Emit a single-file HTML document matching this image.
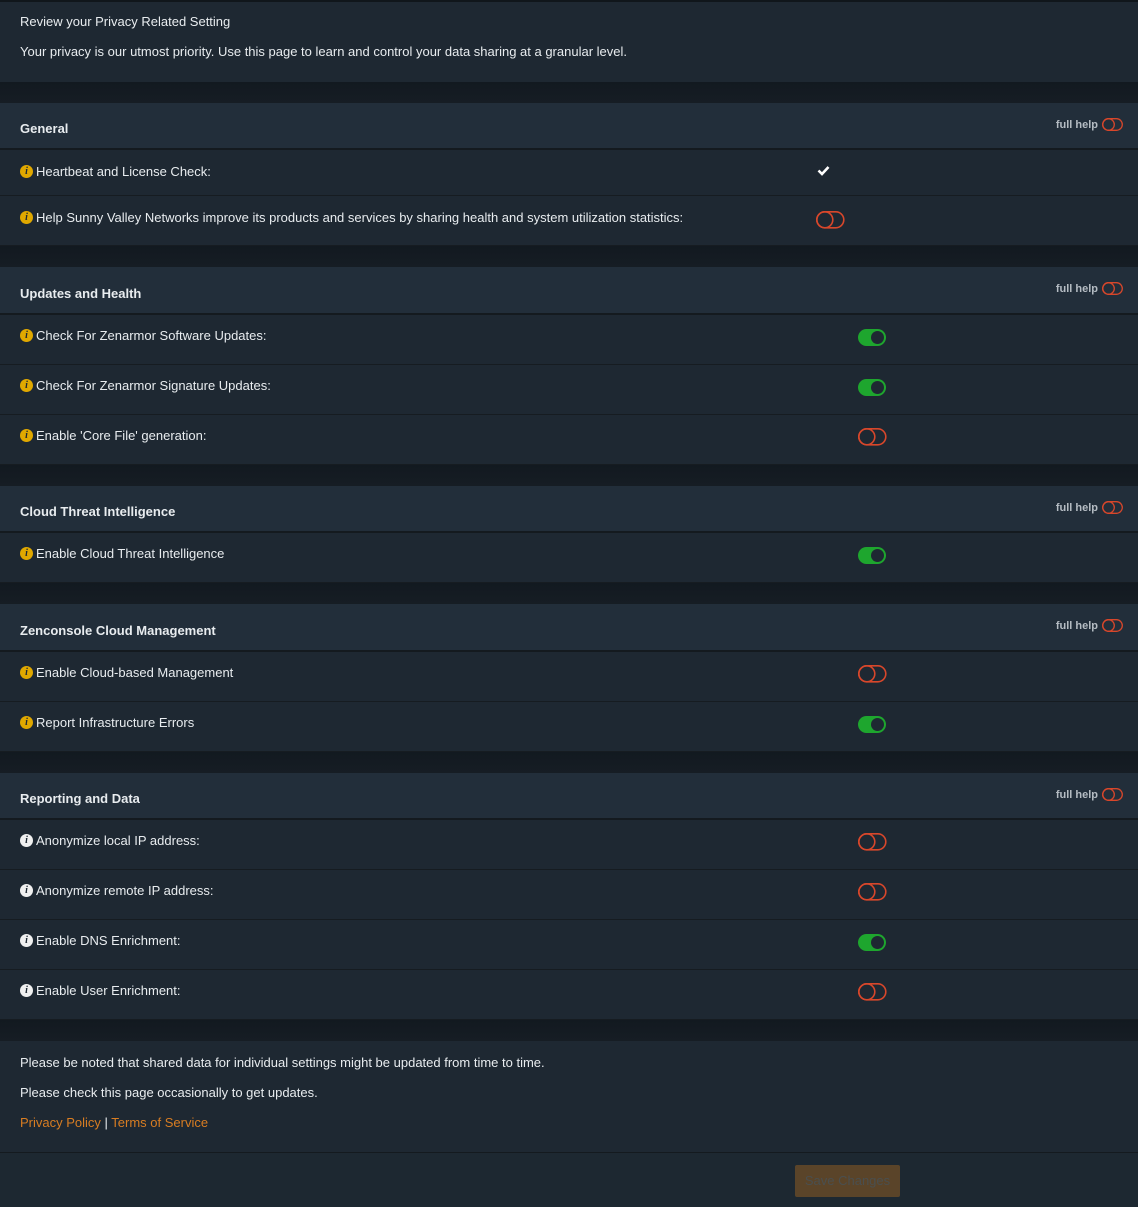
<!DOCTYPE html>
<html><head><meta charset="utf-8"><style>
*{margin:0;padding:0;box-sizing:border-box}
body{width:1138px;height:1207px;background:#1d2831;font-family:"Liberation Sans",sans-serif;font-size:13px;color:#e8ecef;position:relative;overflow:hidden;padding-top:1px}
.top{height:82px;border-top:2px solid #10161b;background:#1e2832;padding:12px 20px;position:relative;margin-top:-1px}
.gap{height:21px;background:linear-gradient(#121920,#161d24)}
.hdr{background:#222e3a;border-bottom:2px solid #141a1f;position:relative;font-weight:bold;padding-left:20px;font-size:13px}
.row{background:#1e2832;border-bottom:1px solid #161c21;position:relative;padding-left:20px}
.row span.t{position:absolute;left:20px;display:flex;align-items:center}
.fh{position:absolute;right:15px;font-size:11px;color:#b5bcc3;font-weight:bold;display:flex;align-items:center;gap:4px}
.tg{position:absolute;left:858px}
.i{display:inline-block;width:13px;height:13px;border-radius:50%;background:#e0a800;color:#1e2832;font-size:10px;font-weight:bold;text-align:center;line-height:13px;margin-right:3px;font-family:"Liberation Serif",serif}
.i.w{background:#f0f0f0}
.foot{background:#1e2832;height:112px;padding:14px 20px;border-bottom:1px solid #141a1f}
.foot p{margin-top:0;height:30px}
a{color:#d87d22;text-decoration:none}
</style></head><body>
<div class="top"><div style="position:absolute;top:12px">Review your Privacy Related Setting</div><div style="position:absolute;top:42px">Your privacy is our utmost priority. Use this page to learn and control your data sharing at a granular level.</div></div>
<div class="gap"></div>

<div class="hdr" style="height:47px"><span style="position:absolute;top:18px">General</span><span class="fh" style="top:15px">full help <svg width="21" height="13"><rect x="0.7" y="0.7" width="19.6" height="11.6" rx="5.8" fill="none" stroke="#d8472b" stroke-width="1.3"/><circle cx="6.5" cy="6.5" r="5.8" fill="none" stroke="#d8472b" stroke-width="1.3"/></svg></span></div>
<div class="row" style="height:46px"><span class="t" style="top:14px"><i class="i">i</i>Heartbeat and License Check:</span><svg style="position:absolute;left:817px;top:15px" width="13" height="11"><path d="M1.5 5.5 L5 9 L11.5 2" fill="none" stroke="#fff" stroke-width="2.6"/></svg></div>
<div class="row" style="height:50px"><span class="t" style="top:14px"><i class="i">i</i>Help Sunny Valley Networks improve its products and services by sharing health and system utilization statistics:</span><svg class="tg" style="left:816px;top:15px" width="29" height="18"><rect x="0.8" y="0.8" width="27" height="16" rx="8" fill="none" stroke="#d8472b" stroke-width="1.6"/><circle cx="8.8" cy="8.8" r="8" fill="none" stroke="#d8472b" stroke-width="1.6"/></svg></div>
<div class="gap"></div>

<div class="hdr" style="height:48px"><span style="position:absolute;top:19px">Updates and Health</span><span class="fh" style="top:15px">full help <svg width="21" height="13"><rect x="0.7" y="0.7" width="19.6" height="11.6" rx="5.8" fill="none" stroke="#d8472b" stroke-width="1.3"/><circle cx="6.5" cy="6.5" r="5.8" fill="none" stroke="#d8472b" stroke-width="1.3"/></svg></span></div>
<div class="row" style="height:50px"><span class="t" style="top:13px"><i class="i">i</i>Check For Zenarmor Software Updates:</span><svg class="tg" style="top:14px" width="28" height="17"><rect x="0" y="0" width="28" height="17" rx="8.5" fill="#1ea62e"/><circle cx="19.5" cy="8.5" r="6.5" fill="#1e2832"/></svg></div>
<div class="row" style="height:50px"><span class="t" style="top:13px"><i class="i">i</i>Check For Zenarmor Signature Updates:</span><svg class="tg" style="top:14px" width="28" height="17"><rect x="0" y="0" width="28" height="17" rx="8.5" fill="#1ea62e"/><circle cx="19.5" cy="8.5" r="6.5" fill="#1e2832"/></svg></div>
<div class="row" style="height:50px"><span class="t" style="top:13px"><i class="i">i</i>Enable 'Core File' generation:</span><svg class="tg" style="top:13px" width="29" height="18"><rect x="0.8" y="0.8" width="27" height="16" rx="8" fill="none" stroke="#d8472b" stroke-width="1.6"/><circle cx="8.8" cy="8.8" r="8" fill="none" stroke="#d8472b" stroke-width="1.6"/></svg></div>
<div class="gap"></div>

<div class="hdr" style="height:47px"><span style="position:absolute;top:18px">Cloud Threat Intelligence</span><span class="fh" style="top:15px">full help <svg width="21" height="13"><rect x="0.7" y="0.7" width="19.6" height="11.6" rx="5.8" fill="none" stroke="#d8472b" stroke-width="1.3"/><circle cx="6.5" cy="6.5" r="5.8" fill="none" stroke="#d8472b" stroke-width="1.3"/></svg></span></div>
<div class="row" style="height:50px"><span class="t" style="top:13px"><i class="i">i</i>Enable Cloud Threat Intelligence</span><svg class="tg" style="top:14px" width="28" height="17"><rect x="0" y="0" width="28" height="17" rx="8.5" fill="#1ea62e"/><circle cx="19.5" cy="8.5" r="6.5" fill="#1e2832"/></svg></div>
<div class="gap"></div>

<div class="hdr" style="height:48px"><span style="position:absolute;top:19px">Zenconsole Cloud Management</span><span class="fh" style="top:15px">full help <svg width="21" height="13"><rect x="0.7" y="0.7" width="19.6" height="11.6" rx="5.8" fill="none" stroke="#d8472b" stroke-width="1.3"/><circle cx="6.5" cy="6.5" r="5.8" fill="none" stroke="#d8472b" stroke-width="1.3"/></svg></span></div>
<div class="row" style="height:50px"><span class="t" style="top:13px"><i class="i">i</i>Enable Cloud-based Management</span><svg class="tg" style="top:13px" width="29" height="18"><rect x="0.8" y="0.8" width="27" height="16" rx="8" fill="none" stroke="#d8472b" stroke-width="1.6"/><circle cx="8.8" cy="8.8" r="8" fill="none" stroke="#d8472b" stroke-width="1.6"/></svg></div>
<div class="row" style="height:50px"><span class="t" style="top:13px"><i class="i">i</i>Report Infrastructure Errors</span><svg class="tg" style="top:14px" width="28" height="17"><rect x="0" y="0" width="28" height="17" rx="8.5" fill="#1ea62e"/><circle cx="19.5" cy="8.5" r="6.5" fill="#1e2832"/></svg></div>
<div class="gap"></div>

<div class="hdr" style="height:47px"><span style="position:absolute;top:18px">Reporting and Data</span><span class="fh" style="top:15px">full help <svg width="21" height="13"><rect x="0.7" y="0.7" width="19.6" height="11.6" rx="5.8" fill="none" stroke="#d8472b" stroke-width="1.3"/><circle cx="6.5" cy="6.5" r="5.8" fill="none" stroke="#d8472b" stroke-width="1.3"/></svg></span></div>
<div class="row" style="height:50px"><span class="t" style="top:13px"><i class="i w">i</i>Anonymize local IP address:</span><svg class="tg" style="top:13px" width="29" height="18"><rect x="0.8" y="0.8" width="27" height="16" rx="8" fill="none" stroke="#d8472b" stroke-width="1.6"/><circle cx="8.8" cy="8.8" r="8" fill="none" stroke="#d8472b" stroke-width="1.6"/></svg></div>
<div class="row" style="height:50px"><span class="t" style="top:13px"><i class="i w">i</i>Anonymize remote IP address:</span><svg class="tg" style="top:13px" width="29" height="18"><rect x="0.8" y="0.8" width="27" height="16" rx="8" fill="none" stroke="#d8472b" stroke-width="1.6"/><circle cx="8.8" cy="8.8" r="8" fill="none" stroke="#d8472b" stroke-width="1.6"/></svg></div>
<div class="row" style="height:50px"><span class="t" style="top:13px"><i class="i w">i</i>Enable DNS Enrichment:</span><svg class="tg" style="top:14px" width="28" height="17"><rect x="0" y="0" width="28" height="17" rx="8.5" fill="#1ea62e"/><circle cx="19.5" cy="8.5" r="6.5" fill="#1e2832"/></svg></div>
<div class="row" style="height:50px"><span class="t" style="top:13px"><i class="i w">i</i>Enable User Enrichment:</span><svg class="tg" style="top:13px" width="29" height="18"><rect x="0.8" y="0.8" width="27" height="16" rx="8" fill="none" stroke="#d8472b" stroke-width="1.6"/><circle cx="8.8" cy="8.8" r="8" fill="none" stroke="#d8472b" stroke-width="1.6"/></svg></div>
<div class="gap"></div>

<div class="foot"><p>Please be noted that shared data for individual settings might be updated from time to time.</p><p>Please check this page occasionally to get updates.</p><p><a>Privacy Policy</a> | <a>Terms of Service</a></p></div>
<div style="position:absolute;left:795px;top:1165px;width:105px;height:32px;background:#5a4429;border-radius:2px;color:#4a4f4f;text-align:center;line-height:32px;font-size:13px">Save Changes</div>
</body></html>
